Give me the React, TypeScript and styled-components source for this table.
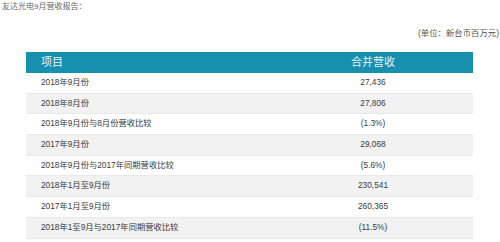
import { Fragment } from 'react'
import styled, { createGlobalStyle } from 'styled-components'

const GlobalStyle = createGlobalStyle`
	html, body {
		margin: 0;
		padding: 0;
		background: #fff;
	}
	body {
		font-family: "Liberation Sans", Arial, "Noto Sans CJK SC", sans-serif;
	}
`

const Page = styled.div`
	width: 500px;
	height: 242px;
	overflow: hidden;
	display: flex;
	flex-direction: column;
`

const Title = styled.p`
	margin: 0;
	padding: 1px 0 0 2px;
	height: 11px;
	line-height: 11px;
	font-size: 8px;
	color: #6a6a6a;
`

const Unit = styled.p`
	margin: 16px 1px 0 0;
	height: 11px;
	line-height: 11px;
	font-size: 8.4px;
	color: #555;
	text-align: right;
`

const Table = styled.div`
	margin: 13px 27px 0 26px;
	display: grid;
	grid-template-columns: 247px 1fr;
`

const HeadCell = styled.div<{ $center?: boolean }>`
	height: 21px;
	line-height: 21px;
	background: #1790b0;
	color: #e6f4f8;
	font-size: 11px;
	padding-left: ${({ $center }) => ($center ? '0' : '15px')};
	text-align: ${({ $center }) => ($center ? 'center' : 'left')};
`

const Cell = styled.div<{ $striped: boolean; $center?: boolean }>`
	height: 19.7px;
	line-height: 19.7px;
	background: ${({ $striped }) => ($striped ? '#f2f2f2' : '#fff')};
	border-bottom: 1px solid #e9e9e9;
	color: #3a3a3a;
	font-size: 8.3px;
	padding-left: ${({ $center }) => ($center ? '0' : '15px')};
	text-align: ${({ $center }) => ($center ? 'center' : 'left')};
`

const rows: [string, string][] = [
	['2018年9月份', '27,436'],
	['2018年8月份', '27,806'],
	['2018年9月份与8月份营收比较', '(1.3%)'],
	['2017年9月份', '29,068'],
	['2018年9月份与2017年同期营收比较', '(5.6%)'],
	['2018年1月至9月份', '230,541'],
	['2017年1月至9月份', '260,365'],
	['2018年1至9月与2017年同期营收比较', '(11.5%)'],
]

const App = () => {
	return (
		<>
			<GlobalStyle />
			<Page>
				<Title>友达光电9月营收报告：</Title>
				<Unit>(单位：新台币百万元)</Unit>
				<Table>
					<HeadCell>项目</HeadCell>
					<HeadCell $center>合并营收</HeadCell>
					{rows.map(([label, value], i) => (
						<Fragment key={label}>
							<Cell $striped={i % 2 === 1}>{label}</Cell>
							<Cell $striped={i % 2 === 1} $center>
								{value}
							</Cell>
						</Fragment>
					))}
				</Table>
			</Page>
		</>
	)
}

export default App
